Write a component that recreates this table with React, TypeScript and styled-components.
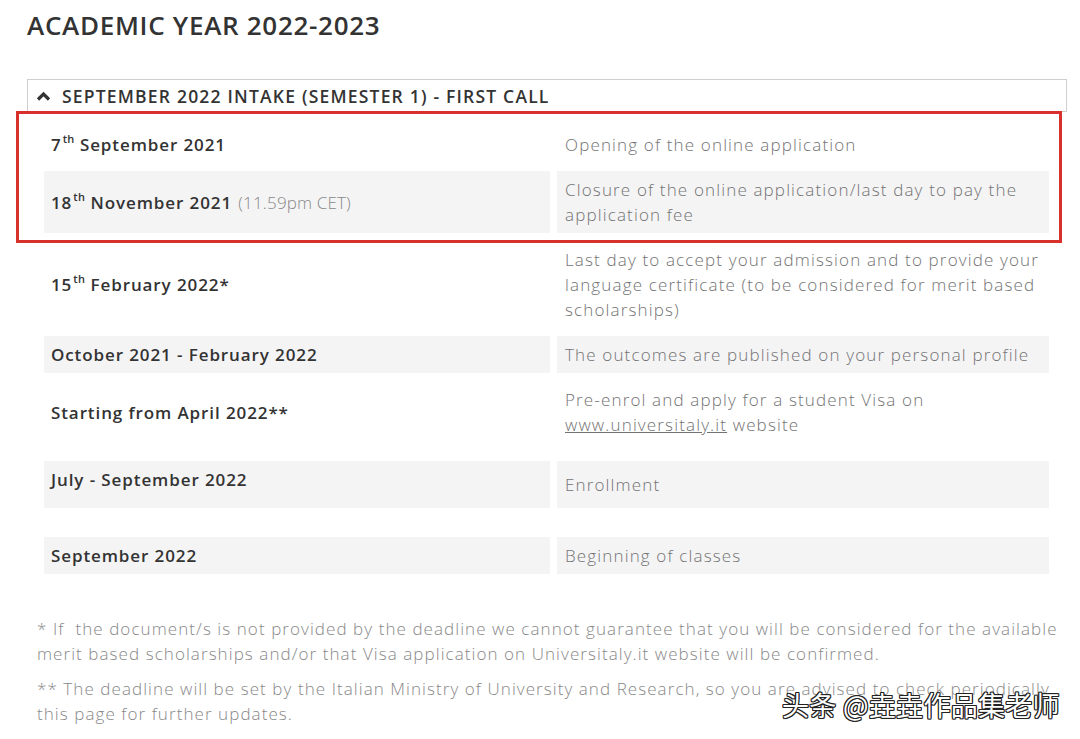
import React from 'react';
import styled, { createGlobalStyle } from 'styled-components';

const GlobalStyle = createGlobalStyle`
  body {
    margin: 0;
    background: #fff;
    font-family: 'Open Sans', 'Liberation Sans', sans-serif;
    color: #333;
  }
`;

type Variant = 'normal' | 'tall' | 'last';

type Deadline = {
  date: React.ReactNode;
  desc: React.ReactNode;
  shaded?: boolean;
  variant?: Variant;
};

const App = () => {
  const deadlines: Deadline[] = [
    {
      date: (
        <>
          7<Sup>th</Sup> September 2021
        </>
      ),
      desc: 'Opening of the online application',
    },
    {
      date: (
        <>
          18<Sup>th</Sup> November 2021 <Light>(11.59pm CET)</Light>
        </>
      ),
      desc: (
        <>
          Closure of the online application/last day to pay the
          <br />
          application fee
        </>
      ),
      shaded: true,
    },
    {
      date: (
        <>
          15<Sup>th</Sup> February 2022*
        </>
      ),
      desc: (
        <>
          Last day to accept your admission and to provide your
          <br />
          language certificate (to be considered for merit based
          <br />
          scholarships)
        </>
      ),
    },
    {
      date: 'October 2021 - February 2022',
      desc: 'The outcomes are published on your personal profile',
      shaded: true,
    },
    {
      date: 'Starting from April 2022**',
      desc: (
        <>
          Pre-enrol and apply for a student Visa on
          <br />
          <Link href="#">www.universitaly.it</Link> website
        </>
      ),
    },
    { date: 'July - September 2022', desc: 'Enrollment', shaded: true, variant: 'tall' },
    { date: 'September 2022', desc: 'Beginning of classes', shaded: true, variant: 'last' },
  ];

  return (
    <>
      <GlobalStyle />
      <Page>
        <Title>ACADEMIC YEAR 2022-2023</Title>
        <Section>
          <AccordionHeader>
            <svg width="15" height="12" viewBox="0 0 15 12">
              <polyline points="2,9.5 7.5,4 13,9.5" fill="none" stroke="#333" strokeWidth="3.2" />
            </svg>
            <AccordionTitle>SEPTEMBER 2022 INTAKE (SEMESTER 1) - FIRST CALL</AccordionTitle>
          </AccordionHeader>
          <Table>
            {deadlines.map((d, i) => (
              <Row key={i} $variant={d.variant ?? 'normal'}>
                <DateCell $shaded={!!d.shaded} $top={d.variant === 'tall'}>
                  <span>{d.date}</span>
                </DateCell>
                <DescCell $shaded={!!d.shaded}>
                  <span>{d.desc}</span>
                </DescCell>
              </Row>
            ))}
          </Table>
          <Highlight />
        </Section>
        <Notes>
          <Note>
            * If&nbsp; the document/s is not provided by the deadline we cannot guarantee that you will be considered for the available
            <br />
            merit based scholarships and/or that Visa application on Universitaly.it website will be confirmed.
          </Note>
          <Note>
            ** The deadline will be set by the Italian Ministry of University and Research, so you are advised to check periodically
            <br />
            this page for further updates.
          </Note>
        </Notes>
        <Watermark>头条 @垚垚作品集老师</Watermark>
      </Page>
    </>
  );
};

export default App;

const Page = styled.div`
  position: relative;
  width: 1080px;
  height: 739px;
  padding: 9px 0 0 27px;
  box-sizing: border-box;
  overflow: hidden;
`;

const Title = styled.h1`
  margin: 0;
  font-size: 26px;
  line-height: 32px;
  font-weight: 600;
  color: #333;
  letter-spacing: 0.7px;
`;

const Section = styled.div`
  position: relative;
  width: 1040px;
  margin-top: 38px;
`;

const AccordionHeader = styled.div`
  display: flex;
  align-items: center;
  gap: 11px;
  height: 33px;
  box-sizing: border-box;
  padding-left: 8px;
  border: 1px solid #cfcfcf;
  background: #fff;
`;

const AccordionTitle = styled.span`
  font-size: 17.5px;
  font-weight: 600;
  color: #333;
  letter-spacing: 1.2px;
`;

const Table = styled.div`
  display: flex;
  flex-direction: column;
  gap: 8px;
  padding: 14px 0 0 17px;
`;

const Row = styled.div<{ $variant: Variant }>`
  display: grid;
  grid-template-columns: 506px 492px;
  column-gap: 7px;
  margin-top: ${(p) => (p.$variant === 'tall' ? '10px' : p.$variant === 'last' ? '21px' : '0')};
  min-height: ${(p) => (p.$variant === 'tall' ? '47px' : 'auto')};
`;

const Cell = styled.div<{ $shaded: boolean }>`
  display: flex;
  align-items: center;
  padding: 6px 8px;
  font-size: 17px;
  line-height: 25px;
  background: ${(p) => (p.$shaded ? '#f4f4f5' : 'transparent')};
`;

const DateCell = styled(Cell)<{ $top: boolean }>`
  padding-left: 7px;
  align-items: ${(p) => (p.$top ? 'flex-start' : 'center')};
  white-space: pre;
  font-weight: 600;
  color: #333;
  letter-spacing: 0.9px;
`;

const DescCell = styled(Cell)`
  font-weight: 300;
  color: #737373;
  letter-spacing: 1.15px;
`;

const Sup = styled.sup`
  font-size: 11px;
  line-height: 0;
  position: relative;
  top: -1px;
  margin-left: 1px;
  letter-spacing: 0.3px;
`;

const Light = styled.span`
  font-weight: 300;
  color: #888;
  margin-left: 1px;
  letter-spacing: 0.15px;
`;

const Link = styled.a`
  color: #737373;
  text-decoration: underline;
`;

const Highlight = styled.div`
  position: absolute;
  left: -11px;
  top: 32px;
  width: 1046px;
  height: 132px;
  box-sizing: border-box;
  border: 3px solid #d8302b;
  pointer-events: none;
`;

const Notes = styled.div`
  display: flex;
  flex-direction: column;
  gap: 10px;
  margin-top: 42px;
  padding-left: 10px;
`;

const Note = styled.p`
  margin: 0;
  font-size: 17px;
  line-height: 25px;
  font-weight: 300;
  color: #888;
  letter-spacing: 1.07px;
  white-space: nowrap;
`;

const Watermark = styled.div`
  position: absolute;
  left: 782px;
  top: 685px;
  font-family: 'Noto Sans CJK SC', sans-serif;
  font-size: 27px;
  letter-spacing: 0.3px;
  color: #fff;
  white-space: nowrap;
  text-shadow:
    1px 0 0 #222,
    -1px 0 0 #222,
    0 1px 0 #222,
    0 -1px 0 #222,
    1px 1px 0 #222,
    -1px -1px 0 #222,
    1px -1px 0 #222,
    -1px 1px 0 #222;
`;
